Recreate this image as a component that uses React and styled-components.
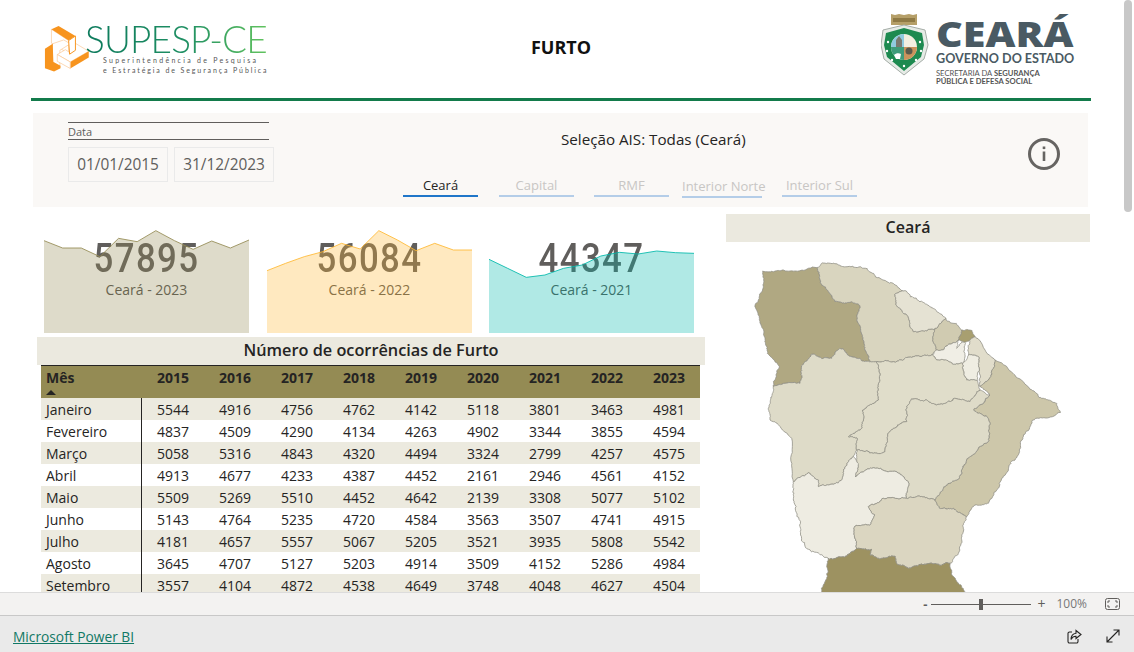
import React from 'react'
import styled, { createGlobalStyle } from 'styled-components'

const UI_FONT = `"Open Sans", "Noto Sans", "Liberation Sans", sans-serif`

const years = [2015, 2016, 2017, 2018, 2019, 2020, 2021, 2022, 2023]

const rows = [
	['Janeiro', 5544, 4916, 4756, 4762, 4142, 5118, 3801, 3463, 4981],
	['Fevereiro', 4837, 4509, 4290, 4134, 4263, 4902, 3344, 3855, 4594],
	['Março', 5058, 5316, 4843, 4320, 4494, 3324, 2799, 4257, 4575],
	['Abril', 4913, 4677, 4233, 4387, 4452, 2161, 2946, 4561, 4152],
	['Maio', 5509, 5269, 5510, 4452, 4642, 2139, 3308, 5077, 5102],
	['Junho', 5143, 4764, 5235, 4720, 4584, 3563, 3507, 4741, 4915],
	['Julho', 4181, 4657, 5557, 5067, 5205, 3521, 3935, 5808, 5542],
	['Agosto', 3645, 4707, 5127, 5203, 4914, 3509, 4152, 5286, 4984],
	['Setembro', 3557, 4104, 4872, 4538, 4649, 3748, 4048, 4627, 4504]
]

const tabs = [
	{ label: 'Ceará', active: true, width: 75, gap: 0 },
	{ label: 'Capital', width: 75, gap: 21 },
	{ label: 'RMF', width: 75, gap: 20 },
	{ label: 'Interior Norte', width: 80, gap: 13, low: true },
	{ label: 'Interior Sul', width: 75, gap: 20 }
]

const cards = [
	{
		value: 57895,
		label: 'Ceará - 2023',
		color: '#948b54',
		ys: [62, 84, 84, 110, 55, 65, 32, 62, 88, 63, 84, 60]
	},
	{
		value: 56084,
		label: 'Ceará - 2022',
		color: '#ffb833',
		ys: [152, 130, 110, 95, 70, 87, 32, 60, 92, 70, 90, 90]
	},
	{
		value: 44347,
		label: 'Ceará - 2021',
		color: '#01b8aa',
		ys: [118, 145, 172, 165, 145, 135, 108, 97, 102, 93, 98, 100]
	}
]

// map regions, coordinates are 3x page pixels measured from (740,255)
const regions = [
	{
		fill: '#b0a882',
		pts: [[68, 48], [130, 45], [232, 38], [245, 90], [285, 140], [335, 140], [360, 152], [350, 195], [362, 225], [375, 285], [392, 320], [350, 310], [300, 280], [275, 310], [215, 298], [185, 345], [180, 385], [100, 395], [115, 330], [82, 295], [75, 250], [60, 200], [45, 152], [70, 95]]
	},
	{
		fill: '#d9d5bf',
		pts: [[232, 38], [245, 25], [300, 32], [365, 38], [420, 70], [490, 108], [465, 118], [468, 150], [505, 185], [510, 215], [520, 230], [585, 222], [578, 255], [590, 285], [575, 300], [520, 305], [460, 320], [410, 320], [392, 320], [375, 285], [362, 225], [350, 195], [360, 152], [335, 140], [285, 140], [245, 90]]
	},
	{
		fill: '#e5e2d3',
		pts: [[490, 108], [540, 140], [580, 160], [618, 192], [585, 222], [520, 230], [510, 215], [505, 185], [468, 150], [465, 118]]
	},
	{
		fill: '#d0cbb1',
		pts: [[618, 192], [665, 225], [655, 255], [610, 285], [590, 285], [578, 255], [585, 222]]
	},
	{
		fill: '#a89f70',
		pts: [[665, 225], [695, 226], [705, 245], [690, 255], [675, 262], [655, 255]]
	},
	{
		fill: '#f0eee5',
		pts: [[590, 285], [610, 285], [655, 255], [650, 280], [665, 262], [675, 262], [668, 325], [640, 328], [620, 315], [590, 315], [578, 300]]
	},
	{
		fill: '#e1ddcb',
		pts: [[690, 255], [705, 245], [765, 315], [745, 375], [720, 395], [718, 345], [715, 305], [685, 300]]
	},
	{
		fill: '#efede2',
		pts: [[685, 300], [715, 305], [718, 345], [712, 378], [680, 375], [668, 325]]
	},
	{
		fill: '#cdc7aa',
		pts: [[765, 315], [850, 380], [905, 430], [950, 445], [962, 472], [878, 495], [850, 545], [825, 615], [785, 670], [745, 745], [705, 750], [680, 785], [640, 760], [600, 760], [585, 735], [610, 700], [650, 675], [680, 615], [745, 560], [750, 505], [745, 490], [700, 465], [750, 420], [720, 395], [745, 375]]
	},
	{
		fill: '#e0ddca',
		pts: [[410, 320], [460, 320], [520, 305], [575, 300], [578, 300], [590, 315], [620, 315], [640, 328], [668, 325], [680, 375], [712, 378], [720, 405], [690, 440], [645, 430], [590, 450], [560, 435], [515, 432], [500, 455], [500, 500], [460, 520], [445, 535], [435, 590], [400, 595], [350, 585], [352, 550], [325, 545], [365, 520], [370, 495], [368, 465], [415, 435], [418, 380]]
	},
	{
		fill: '#dedbc8',
		pts: [[100, 395], [180, 385], [185, 345], [215, 298], [275, 310], [300, 280], [350, 310], [392, 320], [410, 320], [418, 380], [415, 435], [368, 465], [370, 495], [365, 520], [325, 545], [352, 550], [350, 585], [340, 605], [310, 645], [305, 675], [265, 690], [235, 695], [235, 675], [205, 653], [160, 680], [155, 550], [90, 495], [85, 460], [95, 425]]
	},
	{
		fill: '#dedbc8',
		pts: [[515, 432], [560, 435], [590, 450], [645, 430], [690, 440], [720, 405], [750, 420], [700, 465], [745, 490], [750, 505], [745, 560], [680, 615], [650, 675], [610, 700], [585, 735], [540, 725], [500, 730], [505, 680], [470, 650], [395, 640], [345, 665], [355, 630], [350, 585], [400, 595], [435, 590], [445, 535], [460, 520], [500, 500], [500, 455]]
	},
	{
		fill: '#eeece2',
		pts: [[160, 680], [205, 653], [235, 675], [235, 695], [265, 690], [305, 675], [310, 645], [340, 605], [355, 630], [345, 665], [395, 640], [470, 650], [505, 680], [500, 730], [430, 730], [385, 755], [405, 780], [390, 810], [345, 813], [350, 880], [320, 903], [265, 910], [200, 880], [180, 815], [160, 735]]
	},
	{
		fill: '#dbd6c1',
		pts: [[385, 755], [430, 730], [500, 730], [540, 725], [585, 735], [600, 760], [640, 760], [680, 785], [670, 820], [655, 895], [630, 925], [570, 925], [510, 940], [470, 925], [465, 903], [425, 910], [390, 900], [395, 883], [350, 880], [345, 813], [390, 810], [405, 780]]
	},
	{
		fill: '#9d9261',
		pts: [[265, 910], [320, 903], [350, 880], [395, 883], [390, 900], [425, 910], [465, 903], [470, 925], [510, 940], [570, 925], [630, 925], [635, 960], [655, 985], [680, 1015], [700, 1060], [225, 1060], [245, 1010], [262, 965]]
	}
]

function noise(x, y) {
	const s = Math.sin(x * 12.9898 + y * 78.233) * 43758.5453
	return s - Math.floor(s) - 0.5
}

// midpoint displacement, gives the same wiggle to both regions sharing an edge
function wiggle(a, b, amp, depth) {
	if (depth === 0) return []
	const sx = a[0] + b[0]
	const sy = a[1] + b[1]
	const m = [sx / 2 + noise(sx, sy) * amp, sy / 2 + noise(sy, sx) * amp]
	return [
		...wiggle(a, m, amp * 0.7, depth - 1),
		m,
		...wiggle(m, b, amp * 0.7, depth - 1)
	]
}

function regionPoints(pts) {
	const out = []
	pts.forEach((p, i) => {
		const q = pts[(i + 1) % pts.length]
		const len = Math.hypot(q[0] - p[0], q[1] - p[1])
		out.push(p, ...wiggle(p, q, Math.min(len * 0.18, 12), 4))
	})
	return out.map((p) => p[0].toFixed(1) + ',' + p[1].toFixed(1)).join(' ')
}

function SupespCube() {
	return (
		<CubeSvg viewBox="70 72 140 148">
			<g fill="#fff" stroke="#fbc48c" strokeWidth="2">
				<polygon points="92,85 145,120 145,160 92,128" />
				<polygon points="95,130 130,118 150,130 118,150 118,200 95,185" />
				<polygon points="165,128 207,153 150,186 110,163 135,148 150,158" />
			</g>
			<g fill="#f7941e">
				<polygon points="92,85 114,75 166,106 145,120" />
				<polygon points="145,120 166,106 166,150 148,162" fill="#fff" stroke="#f7941e" strokeWidth="3" />
				<polygon points="72,145 96,130 98,186 120,198 120,205 100,215 72,205" />
				<polygon points="150,186 207,153 207,172 150,206" />
				<polygon points="110,163 150,186 150,206 110,184" fill="#fff" stroke="#fbc48c" strokeWidth="2" />
			</g>
		</CubeSvg>
	)
}

function Shield() {
	return (
		<ShieldSvg viewBox="882 12 48 64">
			<path d="M892 14l4 1 4-1 5 1 5-1 4 1 4-1v11h-26z" fill="#b59f68" />
			<rect x="894" y="18" width="22" height="4" fill="#8f7a45" />
			<path d="M905 25l21 5 3 15-4 14-20 16-20-16-3-14 2-15z" fill="#e6ebe6" stroke="#a5ada7" />
			<path d="M905 28l18 5 2 12-3 12-17 14-17-14-3-12 2-12z" fill="#1d8a50" />
			<circle cx="905" cy="47" r="13" fill="#f2efe0" />
			<path d="M905 34a13 13 0 0 0-13 13h13z" fill="#8fcbe0" />
			<path d="M905 47h13a13 13 0 0 1-13 13z" fill="#c9935c" />
			<path d="M892 47h13v13a13 13 0 0 1-13-13z" fill="#3e9c7a" />
			<circle cx="910" cy="51" r="3.5" fill="#5b5a4c" />
			<path d="M897 47v-7l3-4 3 4v7z" fill="#7a7a70" />
			<path d="M895 55c2-2 5-2 7-1l-1 5h-4z" fill="#fff" />
			<g fill="#fff">
				<circle cx="889" cy="42" r="1.2" />
				<circle cx="888" cy="51" r="1.2" />
				<circle cx="893" cy="60" r="1.2" />
				<circle cx="905" cy="66" r="1.2" />
				<circle cx="917" cy="60" r="1.2" />
				<circle cx="922" cy="51" r="1.2" />
				<circle cx="921" cy="42" r="1.2" />
			</g>
		</ShieldSvg>
	)
}

function AreaChart({ color, ys }) {
	const step = 615 / (ys.length - 1)
	const line = ys.map((y, i) => (i * step).toFixed(1) + ',' + y).join(' ')
	return (
		<ChartSvg viewBox="0 30 615 309">
			<polygon points={`0,339 ${line} 615,339`} fill={color} fillOpacity="0.31" />
			<polyline points={line} fill="none" stroke={color} strokeWidth="3" strokeOpacity="0.85" />
		</ChartSvg>
	)
}

function InfoIcon() {
	return (
		<svg width="34" height="34" viewBox="0 0 34 34" fill="none" stroke="#666462">
			<circle cx="17" cy="17" r="14.5" strokeWidth="3" />
			<path d="M17 14.5v9.5" strokeWidth="2.6" />
			<path d="M17 9.5v2.6" strokeWidth="2.6" />
		</svg>
	)
}

function FitIcon() {
	return (
		<svg width="15" height="12" viewBox="0 0 15 12" fill="none" stroke="#605e5c">
			<rect x="0.5" y="0.5" width="14" height="11" rx="2" />
			<path d="M3 5V3h2M10 3h2v2M12 7v2h-2M5 9H3V7" />
		</svg>
	)
}

function ShareIcon() {
	return (
		<svg width="15" height="15" viewBox="0 0 15 15" fill="none" stroke="#252423" strokeWidth="1.1">
			<path d="M5 3H2.500A1.500 1.500 0 0 0 1 4.500v8A1.500 1.500 0 0 0 2.500 14h7a1.500 1.500 0 0 0 1.500-1.500V10" />
			<path d="M9 1.500l5 4-5 4V7.300C6.600 7.200 5 8.300 4 10.500c.1-3.700 2-6 5-6.300z" />
		</svg>
	)
}

function ExpandIcon() {
	return (
		<svg width="14" height="14" viewBox="0 0 14 14" fill="none" stroke="#252423" strokeWidth="1.1">
			<path d="M1 13L13 1M7.500 1H13v5.500M1 7.500V13h5.500" />
		</svg>
	)
}

export default function App() {
	return (
		<Frame>
			<GlobalStyle />
			<Report>
				<Header>
					<SupespLogo>
						<SupespCube />
						<SupespText>
							<SupespName>SUPESP-CE</SupespName>
							<SupespSub $spacing={2.28}>Superintendência de Pesquisa</SupespSub>
							<SupespSub $spacing={1.9}>e Estratégia de Segurança Pública</SupespSub>
						</SupespText>
					</SupespLogo>
					<PageTitle>FURTO</PageTitle>
					<CearaLogo>
						<Shield />
						<CearaText>
							<CearaName>CEARÁ</CearaName>
							<CearaGov>GOVERNO DO ESTADO</CearaGov>
							<CearaSec>
								SECRETARIA DA <b>SEGURANÇA</b>
							</CearaSec>
							<CearaSec>
								<b>PÚBLICA E DEFESA SOCIAL</b>
							</CearaSec>
						</CearaText>
					</CearaLogo>
				</Header>

				<FilterPanel>
					<DateSlicer>
						<SlicerLabel>Data</SlicerLabel>
						<DateRow>
							<DateBox>01/01/2015</DateBox>
							<DateBox>31/12/2023</DateBox>
						</DateRow>
					</DateSlicer>
					<Selection>
						<SelectionTitle>Seleção AIS: Todas (Ceará)</SelectionTitle>
						<TabRow>
							{tabs.map((tab) => (
								<Tab
									key={tab.label}
									$active={tab.active}
									$low={tab.low}
									$width={tab.width}
									$gap={tab.gap}
								>
									{tab.label}
								</Tab>
							))}
						</TabRow>
					</Selection>
					<InfoSlot>
						<InfoIcon />
					</InfoSlot>
				</FilterPanel>

				<Content>
					<LeftColumn>
						<CardRow>
							{cards.map((card) => (
								<Card key={card.label}>
									<CardValue>{card.value}</CardValue>
									<CardLabel>{card.label}</CardLabel>
									<AreaChart color={card.color} ys={card.ys} />
								</Card>
							))}
						</CardRow>
						<TableTitle>Número de ocorrências de Furto</TableTitle>
						<Table>
							<HeadRow>
								<HeadMonth>
									Mês
									<SortMark />
								</HeadMonth>
								{years.map((year) => (
									<HeadCell key={year}>{year}</HeadCell>
								))}
							</HeadRow>
							{rows.map(([month, ...values], i) => (
								<BodyRow key={month} $odd={i % 2 === 0}>
									<MonthCell>{month}</MonthCell>
									{values.map((value, j) => (
										<NumCell key={j}>{value}</NumCell>
									))}
								</BodyRow>
							))}
						</Table>
					</LeftColumn>
					<RightColumn>
						<MapTitle>Ceará</MapTitle>
						<MapSvg viewBox="-42 -39 1092 1050">
							{regions.map((region, i) => (
								<polygon
									key={i}
									points={regionPoints(region.pts)}
									fill={region.fill}
									stroke="#929187"
									strokeWidth="2.4"
									strokeLinejoin="round"
								/>
							))}
						</MapSvg>
					</RightColumn>
				</Content>
				<ScrollThumb />
			</Report>

			<ZoomBar>
				<ZoomSign>-</ZoomSign>
				<ZoomTrack>
					<ZoomThumb />
				</ZoomTrack>
				<ZoomPlus>+</ZoomPlus>
				<ZoomValue>100%</ZoomValue>
				<FitIcon />
			</ZoomBar>

			<Footer>
				<PowerBiLink href="#">Microsoft Power BI</PowerBiLink>
				<FooterIcons>
					<ShareIcon />
					<ExpandIcon />
				</FooterIcons>
			</Footer>
		</Frame>
	)
}

const GlobalStyle = createGlobalStyle`
  html, body {
    margin: 0;
    padding: 0;
    background: #fff;
    overflow: hidden;
  }
  * {
    box-sizing: border-box;
  }
`

const Frame = styled.div`
  width: 1134px;
  height: 652px;
  display: flex;
  flex-direction: column;
  font-family: ${UI_FONT};
  color: #252423;
  overflow: hidden;
`

const Report = styled.div`
  position: relative;
  flex: 1;
  min-height: 0;
  overflow: hidden;
  padding-left: 31px;
`

const Header = styled.header`
  width: 1060px;
  height: 101px;
  border-bottom: 3px solid #137b4b;
  display: grid;
  grid-template-columns: 1fr auto 1fr;
  align-items: start;
`

const SupespLogo = styled.div`
  display: flex;
  align-items: flex-start;
  padding: 25px 0 0 13px;
`

const CubeSvg = styled.svg`
  width: 46px;
  height: 48px;
  flex: none;
`

const SupespText = styled.div`
  display: flex;
  flex-direction: column;
  margin-left: -5px;
`

const SupespName = styled.div`
  font-family: Lato, ${UI_FONT};
  font-weight: 300;
  font-size: 37px;
  line-height: 27px;
  height: 30px;
  width: 182px;
  white-space: nowrap;
  letter-spacing: -0.85px;
  background: linear-gradient(90deg, #0c7a5c, #1f8f63 55%, #62c35f);
  -webkit-background-clip: text;
  background-clip: text;
  -webkit-text-fill-color: transparent;
`

const SupespSub = styled.div`
  font-family: Lato, ${UI_FONT};
  font-size: 7px;
  line-height: 10px;
  letter-spacing: ${(p) => p.$spacing}px;
  color: #555;
  white-space: nowrap;
  padding-left: 18px;
`

const PageTitle = styled.h1`
  margin: 35px 0 0;
  font-size: 18px;
  line-height: 24px;
  font-weight: 700;
  color: #111;
`

const CearaLogo = styled.div`
  justify-self: end;
  display: flex;
  align-items: flex-start;
  padding: 12px 15px 0 0;
`

const ShieldSvg = styled.svg`
  width: 48px;
  height: 64px;
  flex: none;
`

const CearaText = styled.div`
  margin-left: 7px;
  width: 140px;
  display: flex;
  flex-direction: column;
  color: #4a5a63;
`

const CearaName = styled.div`
  font-family: ${UI_FONT};
  font-weight: 800;
  font-size: 35px;
  line-height: 40px;
  white-space: nowrap;
  transform-origin: left center;
  transform: translateY(2px) scaleX(1.18);
`

const CearaGov = styled.div`
  font-family: Lato, ${UI_FONT};
  font-weight: 700;
  font-size: 12.6px;
  line-height: 13px;
  white-space: nowrap;
  margin-bottom: 4px;
`

const CearaSec = styled.div`
  font-family: Lato, ${UI_FONT};
  font-size: 7.6px;
  line-height: 8px;
  white-space: nowrap;
  color: #555;
`

const FilterPanel = styled.section`
  margin: 12px 0 0 2px;
  width: 1055px;
  height: 94px;
  background: #faf8f6;
  display: flex;
  align-items: flex-start;
  padding: 9px 27px 0 35px;
`

const DateSlicer = styled.div`
  width: 206px;
  flex: none;
`

const SlicerLabel = styled.div`
  width: 201px;
  height: 18px;
  border-top: 1px solid #605e5c;
  border-bottom: 1px solid #605e5c;
  font-size: 11px;
  line-height: 17px;
  color: #605e5c;
`

const DateRow = styled.div`
  display: flex;
  gap: 6px;
  margin-top: 7px;
`

const DateBox = styled.div`
  width: 100px;
  height: 35px;
  border: 1px solid #eaeaea;
  font-size: 15.4px;
  line-height: 33px;
  text-align: center;
  color: #605e5c;
`

const Selection = styled.div`
  margin-left: 129px;
  flex: none;
  width: 454px;
`

const SelectionTitle = styled.div`
  padding: 7px 0 0 158px;
  font-size: 15.2px;
  line-height: 20px;
  color: #252423;
  white-space: nowrap;
`

const TabRow = styled.div`
  display: flex;
  align-items: flex-start;
  margin-top: 26px;
`

const Tab = styled.div`
  flex: none;
  width: ${(p) => p.$width}px;
  margin-left: ${(p) => p.$gap}px;
  margin-top: ${(p) => (p.$low ? 1 : 0)}px;
  height: 22px;
  text-align: center;
  font-size: 13px;
  line-height: 20px;
  white-space: nowrap;
  color: ${(p) => (p.$active ? '#252423' : '#c8c6c4')};
  border-bottom: 2px solid ${(p) => (p.$active ? '#1f76c9' : '#b4cde8')};
`

const InfoSlot = styled.div`
  margin: 15px 0 0 auto;
  display: flex;
`

const Content = styled.div`
  width: 1060px;
  display: grid;
  grid-template-columns: 695px 364px;
  margin-top: 0;
`

const LeftColumn = styled.div`
  display: flex;
  flex-direction: column;
`

const CardRow = styled.div`
  display: flex;
  gap: 18px;
  margin: 23px 0 0 13px;
`

const Card = styled.div`
  position: relative;
  width: 205px;
  height: 103px;
  text-align: center;
  color: #605e5c;
  &:nth-child(3) {
    margin-left: -1px;
  }
`

const CardValue = styled.div`
  font-family: Roboto, ${UI_FONT};
  font-size: 40px;
  font-weight: 500;
  line-height: 40px;
  margin-top: 9px;
  letter-spacing: 1.6px;
  transform: scaleX(0.87);
`

const CardLabel = styled.div`
  font-size: 14px;
  line-height: 18px;
  margin-top: 2px;
  color: #55534f;
`

const ChartSvg = styled.svg`
  position: absolute;
  left: 0;
  top: 0;
  width: 205px;
  height: 103px;
`

const TableTitle = styled.div`
  margin: 4px 0 0 6px;
  width: 668px;
  height: 28px;
  background: #ebe9df;
  font-size: 16.3px;
  font-weight: 600;
  line-height: 27px;
  text-align: center;
  color: #252423;
`

const Table = styled.div`
  margin-left: 10px;
  width: 659px;
`

const gridColumns = `101px repeat(9, 62px)`

const HeadRow = styled.div`
  display: grid;
  grid-template-columns: ${gridColumns};
  height: 33px;
  background: #948b54;
  border-top: 1px solid #252423;
  font-size: 14px;
  font-weight: 700;
  line-height: 24px;
  color: #252423;
`

const HeadMonth = styled.div`
  position: relative;
  padding-left: 5px;
`

const SortMark = styled.span`
  position: absolute;
  left: 5px;
  top: 24px;
  border-left: 5px solid transparent;
  border-right: 5px solid transparent;
  border-bottom: 5px solid #252423;
`

const HeadCell = styled.div`
  text-align: right;
  padding-right: 15px;
`

const BodyRow = styled.div`
  display: grid;
  grid-template-columns: ${gridColumns};
  height: 22px;
  background: ${(p) => (p.$odd ? '#eceadf' : '#fff')};
  font-size: 14px;
  line-height: 24px;
  color: #252423;
`

const MonthCell = styled.div`
  padding-left: 5px;
  border-right: 1px solid #252423;
`

const NumCell = styled.div`
  text-align: right;
  padding-right: 15px;
`

const RightColumn = styled.div`
  padding-top: 7px;
`

const MapTitle = styled.div`
  height: 28px;
  background: #ebe9df;
  font-size: 16px;
  font-weight: 600;
  line-height: 27px;
  text-align: center;
  color: #252423;
`

const MapSvg = styled.svg`
  display: block;
  width: 364px;
  height: 350px;
`

const ScrollThumb = styled.div`
  position: absolute;
  top: 0;
  left: 1124px;
  width: 8px;
  height: 212px;
  border-radius: 4px;
  background: #c8c8c8;
`

const ZoomBar = styled.div`
  flex: none;
  height: 24px;
  background: #f3f2f1;
  border-top: 1px solid #dcdcdc;
  border-bottom: 1px solid #c8c8c8;
  display: flex;
  align-items: center;
  justify-content: flex-end;
  padding-right: 14px;
  color: #605e5c;
`

const ZoomSign = styled.span`
  font-size: 13px;
  font-weight: 700;
  line-height: 20px;
  margin-right: 4px;
`

const ZoomTrack = styled.div`
  position: relative;
  width: 100px;
  height: 1px;
  background: #605e5c;
`

const ZoomThumb = styled.span`
  position: absolute;
  left: 48px;
  top: -5px;
  width: 4px;
  height: 11px;
  background: #605e5c;
`

const ZoomPlus = styled.span`
  font-size: 14px;
  line-height: 20px;
  margin-left: 6px;
`

const ZoomValue = styled.span`
  font-size: 12px;
  line-height: 20px;
  margin: 0 18px 0 11px;
  color: #777;
`

const Footer = styled.footer`
  flex: none;
  height: 36px;
  background: #eaeaea;
  display: flex;
  align-items: center;
  justify-content: space-between;
  padding: 4px 14px 0 13px;
`

const PowerBiLink = styled.a`
  font-size: 13.75px;
  font-weight: 500;
  color: #117865;
  text-decoration: underline;
`

const FooterIcons = styled.div`
  display: flex;
  align-items: center;
  gap: 24px;
`
